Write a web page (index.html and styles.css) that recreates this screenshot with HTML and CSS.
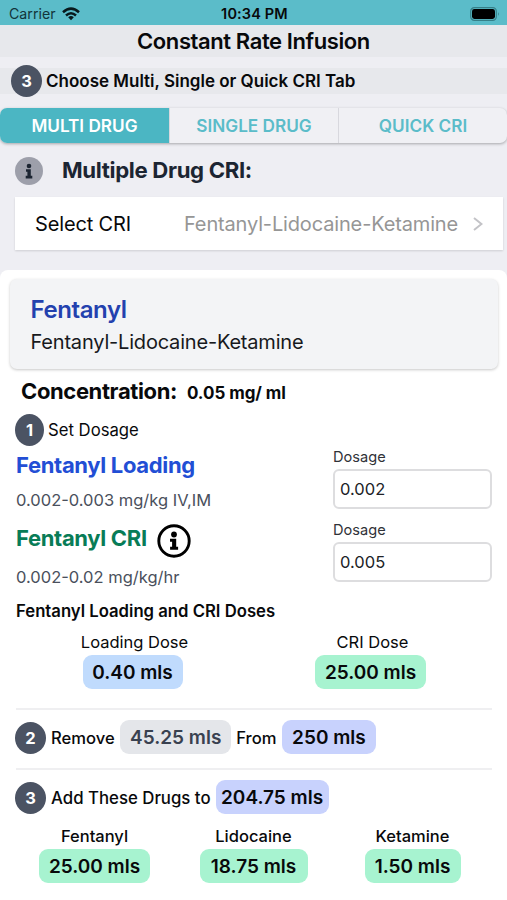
FILE: index.html
```html
<!DOCTYPE html>
<html lang="en">
<head>
<meta charset="utf-8">
<title>Constant Rate Infusion</title>
<link rel="stylesheet" href="styles.css">
</head>
<body>
<div class="status">
  <div class="carrier"><span>Carrier</span>
    <svg width="18" height="14" viewBox="0 0 18 14"><g fill="none" stroke="#08191c" stroke-width="2.5"><path d="M1 5.2Q9-2 17 5.2"/><path d="M4 8.5Q9 4 14 8.5"/></g><path d="M6.2 10.3Q9 7.9 11.8 10.3L9 13.2Z" fill="#08191c"/></svg>
  </div>
  <time class="clock">10:34 PM</time>
  <svg class="battery" width="30" height="14" viewBox="0 0 30 14"><rect x=".7" y=".7" width="25.6" height="12.6" rx="3.6" fill="none" stroke="#367f88" stroke-width="1.2"/><rect x="2" y="2" width="23" height="10" rx="2.4" fill="#000"/><path d="M28 5q1.8 2 0 4z" fill="#367f88"/></svg>
</div>
<header class="title"><h1>Constant Rate Infusion</h1></header>
<div class="choose"><b class="step">3</b><span>Choose Multi, Single or Quick CRI Tab</span></div>
<nav class="tabs"><a class="active"><span>MULTI DRUG</span></a><a><span>SINGLE DRUG</span></a><a><span>QUICK CRI</span></a></nav>
<div class="heading">
  <svg width="28" height="28" viewBox="0 0 28 28"><circle cx="14" cy="14" r="14" fill="#9d9faa"/><circle cx="14" cy="9" r="2.3" fill="#1c2532"/><path d="M11 12.3h4.8v6.5h1.5v2.6H10.700v-2.600h1.700v-4H11z" fill="#1c2532"/></svg>
  <h2>Multiple Drug CRI:</h2>
</div>
<div class="select"><span>Select CRI</span><span class="select-value">Fentanyl-Lidocaine-Ketamine</span>
  <svg width="10" height="14" viewBox="0 0 10 14"><path d="M1 1l7.500 6L1 13" fill="none" stroke="#c3c3c7" stroke-width="2"/></svg>
</div>
<main>
  <section class="card"><h3>Fentanyl</h3><p>Fentanyl-Lidocaine-Ketamine</p></section>
  <div class="conc"><strong>Concentration:</strong><b>0.05 mg/ ml</b></div>
  <div class="set"><b class="step narrow">1</b><span>Set Dosage</span></div>
  <div class="dosage">
    <div class="drug"><h4 class="blue">Fentanyl Loading</h4><p class="range r1">0.002-0.003 mg/kg IV,IM</p></div>
    <label><span>Dosage</span><input value="0.002"></label>
  </div>
  <div class="dosage">
    <div class="drug"><div class="cri"><h4 class="green">Fentanyl CRI</h4>
      <svg width="34" height="34" viewBox="0 0 34 34"><circle cx="17" cy="17" r="15.200" fill="none" stroke="#000" stroke-width="2.900"/><circle cx="17" cy="10.500" r="2.900" fill="#000"/><path d="M13 14.800h6.200v8h1.900v3h-8v-3h2v-5H13z" fill="#000"/></svg></div>
      <p class="range r2">0.002-0.02 mg/kg/hr</p></div>
    <label><span>Dosage</span><input value="0.005"></label>
  </div>
  <h5>Fentanyl Loading and CRI Doses</h5>
  <div class="doses">
    <div class="dose"><span class="nudge">Loading Dose</span><b class="pill p-blue w100">0.40 mls</b></div>
    <div class="dose"><span class="nudge">CRI Dose</span><b class="pill p-green w111">25.00 mls</b></div>
  </div>
  <div class="line remove"><b class="step">2</b><span>Remove</span><b class="pill p-gray w111">45.25 mls</b><span>From</span><b class="pill p-indigo w94">250 mls</b></div>
  <div class="line add"><b class="step">3</b><span>Add These Drugs to</span><b class="pill p-indigo w113">204.75 mls</b></div>
  <div class="drugs">
    <div class="dose medium"><span>Fentanyl</span><b class="pill p-green w111">25.00 mls</b></div>
    <div class="dose medium"><span>Lidocaine</span><b class="pill p-green w108">18.75 mls</b></div>
    <div class="dose medium"><span>Ketamine</span><b class="pill p-green w96">1.50 mls</b></div>
  </div>
</main>
</body>
</html>
```
FILE: styles.css
```css
* { box-sizing: border-box; margin: 0; padding: 0; }
body { width: 507px; height: 900px; overflow: hidden; background: #eeeef3; color: #08090b; font-family: Inter, "Liberation Sans", sans-serif; font-size: 16px; white-space: nowrap; }
svg { display: block; flex: none; }
.status { height: 25px; background: #5bbcc9; display: grid; grid-template-columns: 1fr auto 1fr; align-items: center; padding: 2px 7px 0 9px; }
.carrier { display: flex; align-items: center; gap: 6px; font-size: 14.2px; color: #12343a; }
.clock { font-size: 14.5px; font-weight: 600; letter-spacing: .15px; }
.battery { justify-self: end; }
.title { height: 32px; background: #e7e8ec; text-align: center; }
h1 { font-size: 22px; font-weight: 600; line-height: 32px; letter-spacing: -.4px; }
.choose { height: 26px; margin: 11px 0 14px; background: #e7e8ec; display: flex; align-items: center; gap: 4px; padding-left: 11px; font-weight: 600; font-size: 17px; }
.step { width: 31px; height: 32px; border-radius: 50%; background: #4b5363; color: #fff; display: flex; align-items: center; justify-content: center; flex: none; font-size: 16.5px; font-weight: 700; }
.narrow { width: 29px; }
.tabs { height: 35px; display: grid; grid-template-columns: repeat(3, 1fr); border-radius: 7px; overflow: hidden; box-shadow: 0 1px 3px #0000004d; background: #f0f0f4; }
.tabs a { display: flex; align-items: center; justify-content: center; font-size: 17.2px; font-weight: 600; color: #5bbcc9; border-left: 1px solid #d8d8de; }
.tabs .active { background: #4bb6c3; color: #fff; border: 0; }
.heading { height: 54px; display: flex; align-items: center; gap: 19px; padding: 1px 0 0 15px; color: #1c2532; }
h2 { font-size: 22.2px; font-weight: 700; letter-spacing: -.35px; padding-bottom: 2px; }
.select { height: 53px; margin: 0 4px 20px 15px; background: #fff; display: flex; align-items: center; padding: 0 20px; box-shadow: 0 1px 2px #00000022; font-size: 20px; letter-spacing: -.15px; }
.select-value { margin-left: auto; margin-right: 15px; color: #969696; }
main { height: 630px; background: #fff; border-radius: 8px 8px 0 0; padding: 9px 15px 0 16px; }
.card { height: 90px; margin: 0 -6px; padding: 15px 20.5px; background: #f3f4f6; border-radius: 7px; box-shadow: 0 1px 3px #00000038; }
h3 { font-size: 24px; line-height: 32px; font-weight: 600; color: #2341ae; letter-spacing: -.4px; }
.card p { font-size: 20px; line-height: 32px; color: #17191d; letter-spacing: -.19px; }
.conc { height: 45px; padding-left: 5px; display: flex; align-items: baseline; gap: 10px; line-height: 44px; font-size: 17px; letter-spacing: -.05px; }
.conc strong { font-size: 22px; font-weight: 700; letter-spacing: -.38px; }
.set { height: 32px; margin-left: -1px; display: flex; align-items: center; gap: 4px; font-size: 16.7px; }
.dosage { height: 73px; display: flex; justify-content: space-between; }
.drug { padding-top: 3px; }
h4 { font-size: 22px; line-height: 32px; font-weight: 700; letter-spacing: -.33px; }
.blue { color: #224ed5; }
.green { color: #087c57; }
.cri { height: 38px; display: flex; gap: 10px; }
.cri svg { margin-top: 2px; }
.range { font-size: 16.5px; line-height: 24px; color: #4a505c; }
.r1 { margin-top: 7px; }
.r2 { margin-top: 5px; }
label { width: 159px; }
label span { display: block; height: 23px; line-height: 22px; font-size: 14.6px; color: #303238; }
input { width: 159px; height: 40px; border: 2px solid #dddddf; border-radius: 6px; font: 16.5px Inter, sans-serif; padding: 0 5px; color: #202226; display: block; }
h5 { height: 38px; line-height: 39px; font-size: 16.7px; font-weight: 600; }
.doses { display: grid; grid-template-columns: 233px 1fr; height: 78px; }
.dose { display: flex; flex-direction: column; align-items: center; line-height: 24px; font-size: 16.5px; gap: 1px; }
.nudge { padding-left: 4px; }
.pill { height: 34px; border-radius: 9px; font-weight: 600; font-size: 19px; display: flex; align-items: center; justify-content: center; padding-top: 1px; }
.p-blue { background: #c0dbfd; }
.p-green { background: #a7f3d0; }
.p-gray { background: #e4e6ea; color: #394150; }
.p-indigo { background: #c8d2fd; }
.w94 { width: 94px; }
.w96 { width: 96px; }
.w100 { width: 100px; }
.w108 { width: 108px; }
.w111 { width: 111px; }
.w113 { width: 113px; }
.line { height: 60px; border-top: 2px solid #efeff1; display: flex; align-items: center; gap: 5px; padding-bottom: 4px; font-size: 16.6px; font-weight: 500; }
.line .step { margin: 2px 0 0 -1px; }
.line > span { padding-top: 2px; }
.remove .pill { margin-left: .5px; }
.add { height: 56px; padding: 0 0 1px; font-size: 16.8px; }
.drugs { display: grid; grid-template-columns: 159px 159px 159px; margin-left: -1px; }
.medium { font-weight: 500; }
```
